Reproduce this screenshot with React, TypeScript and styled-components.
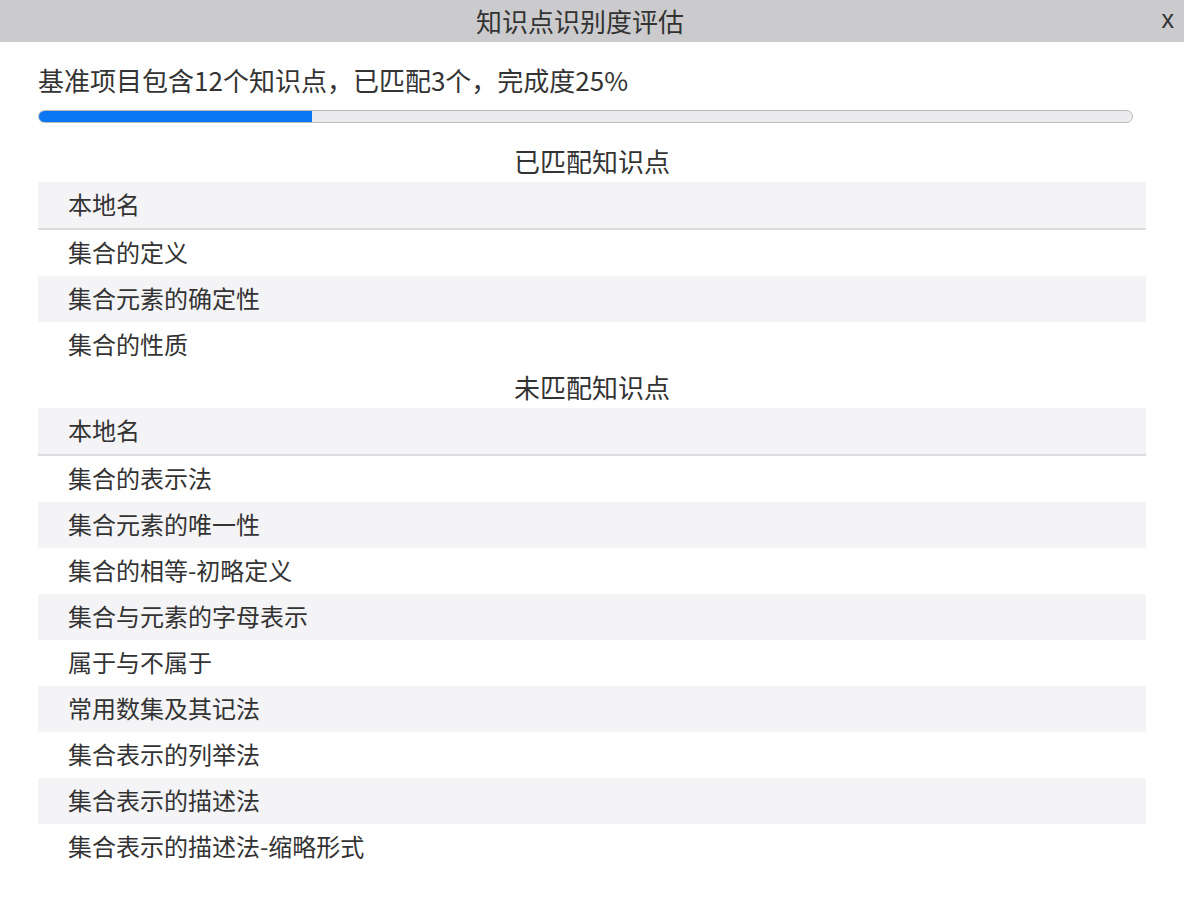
import styled, { createGlobalStyle } from "styled-components";

const GlobalStyle = createGlobalStyle`
  html, body {
    margin: 0;
    padding: 0;
    background: #ffffff;
  }
  body {
    font-family: "Noto Sans CJK SC", "Noto Sans", "Liberation Sans", sans-serif;
    color: #333333;
  }
`;

const Dialog = styled.div`
  width: 1184px;
  min-height: 910px;
  background: #ffffff;
`;

const Header = styled.div`
  height: 42px;
  background: #cbcbcd;
  display: flex;
  align-items: center;
  justify-content: center;
  padding-right: 24px;
  position: relative;
`;

const HeaderTitle = styled.h1`
  margin: 0;
  font-size: 26px;
  font-weight: 400;
  color: #333333;
  line-height: 40px;
`;

const CloseButton = styled.button`
  position: absolute;
  right: 10px;
  top: 0;
  height: 38px;
  line-height: 38px;
  border: none;
  background: transparent;
  font-family: "Liberation Sans", sans-serif;
  font-size: 25px;
  color: #333333;
  padding: 0;
  cursor: pointer;
`;

const Body = styled.div`
  padding: 21px 38px 0;
  display: flex;
  flex-direction: column;
`;

const Summary = styled.div`
  font-size: 26px;
  line-height: 34px;
  height: 36px;
  white-space: nowrap;
`;

const ProgressTrack = styled.div`
  margin: 11px 13px 19px 0;
  height: 13px;
  box-sizing: border-box;
  border: 1px solid #b9b9bc;
  border-radius: 7px;
  background: #ececee;
  overflow: hidden;
`;

const ProgressFill = styled.div`
  height: 100%;
  background: #0b76f2;
`;

const SectionTitle = styled.h2`
  margin: 0;
  height: 40px;
  line-height: 38px;
  text-align: center;
  font-size: 26px;
  font-weight: 400;
  color: #333333;
`;

const Table = styled.div`
  display: flex;
  flex-direction: column;
`;

const HeadRow = styled.div`
  height: 46px;
  line-height: 44px;
  background: #f4f4f6;
  border-bottom: 2px solid #dcdcdf;
  padding-left: 30px;
  font-size: 24px;
`;

const Row = styled.div<{ $striped: boolean }>`
  height: 46px;
  line-height: 44px;
  background: ${(p) => (p.$striped ? "#f4f4f6" : "#ffffff")};
  padding-left: 30px;
  font-size: 24px;
`;

const matched = ["集合的定义", "集合元素的确定性", "集合的性质"];

const unmatched = [
  "集合的表示法",
  "集合元素的唯一性",
  "集合的相等-初略定义",
  "集合与元素的字母表示",
  "属于与不属于",
  "常用数集及其记法",
  "集合表示的列举法",
  "集合表示的描述法",
  "集合表示的描述法-缩略形式",
];

function PointTable({ items }: { items: string[] }) {
  return (
    <Table>
      <HeadRow>本地名</HeadRow>
      {items.map((name, i) => (
        <Row key={name} $striped={i % 2 === 1}>
          {name}
        </Row>
      ))}
    </Table>
  );
}

export default function App() {
  const total = 12;
  const done = 3;
  const percent = Math.round((done / total) * 100);

  return (
    <>
      <GlobalStyle />
      <Dialog>
        <Header>
          <HeaderTitle>知识点识别度评估</HeaderTitle>
          <CloseButton>x</CloseButton>
        </Header>
        <Body>
          <Summary>
            基准项目包含{total}个知识点，已匹配{done}个，完成度{percent}%
          </Summary>
          <ProgressTrack>
            <ProgressFill style={{ width: `${percent}%` }} />
          </ProgressTrack>
          <SectionTitle>已匹配知识点</SectionTitle>
          <PointTable items={matched} />
          <SectionTitle>未匹配知识点</SectionTitle>
          <PointTable items={unmatched} />
        </Body>
      </Dialog>
    </>
  );
}
